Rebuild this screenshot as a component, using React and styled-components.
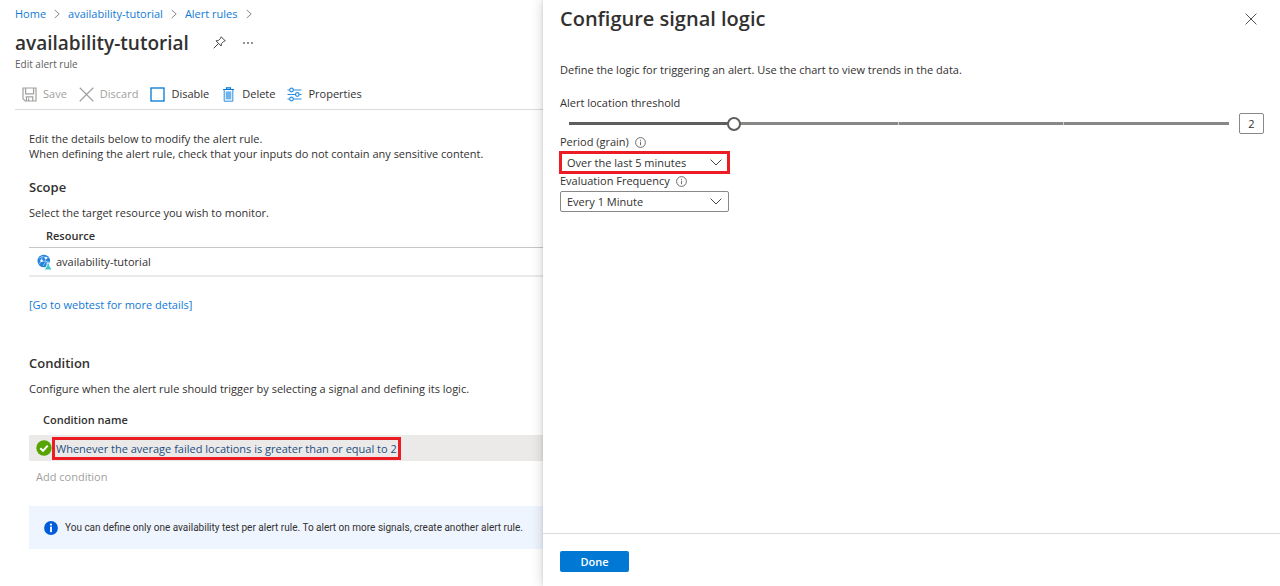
import React, { useState } from "react";
import styled, { createGlobalStyle, css } from "styled-components";

const color = {
  text: "#323130",
  muted: "#605e5c",
  disabled: "#a19f9d",
  line: "#c8c6c4",
  link: "#0f7ad5",
  blue: "#0078d4",
  mark: "#ec1c24",
};

const GlobalStyle = createGlobalStyle`
  *, *::before, *::after { box-sizing: border-box; }
  body {
    margin: 0;
    background: #fff;
    color: ${color.text};
    font: 11px/20px "Open Sans", "Noto Sans", sans-serif;
  }
  h1, h2, h3, p { margin: 0; font-weight: 400; }
  button, input, select { font: inherit; color: inherit; }
  svg { display: block; flex: none; }
`;

const Page = styled.div`
  display: grid;
  grid-template-columns: minmax(0, 543fr) minmax(0, 737fr);
  min-height: 100vh;
`;

/* ---------- alert rule blade ---------- */

const Blade = styled.main`
  overflow: hidden;
  padding-bottom: 20px;
`;

const BladeHeader = styled.header`
  padding: 4px 0 0 15px;
`;

const Breadcrumb = styled.nav`
  display: flex;
  align-items: center;
  gap: 8px;
  white-space: nowrap;
`;

const Link = styled.a`
  color: ${color.link};
  text-decoration: none;
`;

const TitleRow = styled.div`
  display: flex;
  align-items: center;
  height: 29px;
  margin-top: 4px;
`;

const PageTitle = styled.h1`
  margin-right: 24px;
  font-size: 19px;
  font-weight: 600;
  line-height: 30px;
`;

const IconButton = styled.button`
  display: grid;
  place-items: center;
  width: 14px;
  height: 14px;
  margin-right: 14px;
  padding: 0;
  border: 0;
  background: none;
`;

const Subtitle = styled.p`
  color: ${color.muted};
  font-size: 10px;
  line-height: 14px;
`;

const Toolbar = styled.div`
  display: flex;
  gap: 12px;
  height: 31px;
  margin-top: 8px;
  padding-left: 7px;
  border-bottom: 1px solid #dcdbda;
`;

const ToolButton = styled.button`
  display: flex;
  align-items: center;
  gap: 6px;
  padding: 0;
  border: 0;
  background: none;
  white-space: nowrap;
  &:disabled { color: ${color.disabled}; }
`;

const BladeBody = styled.div`
  padding: 21px 0 0 29px;
`;

const Intro = styled.p`
  line-height: 15px;
  white-space: nowrap;
`;

const SectionTitle = styled.h2`
  margin: ${(p) => p.$space}px 0 6px;
  font-size: 13px;
  font-weight: 600;
`;

const Text = styled.p`
  white-space: nowrap;
`;

const Table = styled.table`
  width: 100%;
  margin-top: ${(p) => p.$space || 0}px;
  border-collapse: separate;
  border-spacing: 0;
  white-space: nowrap;
`;

const HeadCell = styled.th`
  height: ${(p) => p.$height}px;
  padding: 0 0 0 ${(p) => p.$indent}px;
  border-bottom: ${(p) => (p.$ruled ? `1px solid ${color.line}` : "0")};
  font-weight: 600;
  text-align: left;
`;

const ResourceCell = styled.td`
  height: 29px;
  padding: 0 0 0 8px;
  border-bottom: 2px solid #eaeaea;
`;

const WithIcon = styled.span`
  display: flex;
  align-items: center;
  gap: 4px;
`;

const WebtestLine = styled.p`
  margin-top: 18px;
`;

const ConditionCell = styled.td`
  height: 26px;
  padding: 0 0 0 7px;
  background: #ebeae9;
`;

const ConditionLine = styled.span`
  display: flex;
  align-items: center;
`;

const ConditionLink = styled.a`
  padding: 0 1px;
  border: 3px solid ${color.mark};
  color: #1b4f80;
  line-height: 17px;
  text-decoration: none;
`;

const AddCondition = styled.button`
  display: block;
  height: 31px;
  padding: 0 0 0 7px;
  border: 0;
  background: none;
  &:disabled { color: ${color.disabled}; }
`;

const InfoBar = styled.div`
  display: flex;
  align-items: center;
  gap: 7px;
  height: 43px;
  margin-top: 14px;
  padding-left: 15px;
  background: #eff5ff;
  font-family: Roboto, sans-serif;
  font-size: 10px;
  white-space: nowrap;
`;

/* ---------- signal logic panel ---------- */

const Panel = styled.aside`
  position: relative;
  display: flex;
  flex-direction: column;
  background: #fff;
  box-shadow: 0 0 3px rgba(0, 0, 0, 0.12), 0 0 12px rgba(0, 0, 0, 0.18);
`;

const PanelHeader = styled.header`
  display: flex;
  align-items: center;
  justify-content: space-between;
  padding: 4px 8px 0 17px;
`;

const PanelTitle = styled.h2`
  font-size: 20px;
  font-weight: 600;
  line-height: 30px;
`;

const PanelBody = styled.form`
  flex: 1;
  padding: 26px 16px 20px 17px;
`;

const ThresholdLabel = styled.label`
  display: block;
  margin-top: 13px;
`;

const SliderRow = styled.div`
  display: flex;
  align-items: center;
  gap: 3px;
  padding-left: 2px;
`;

const TRACK = `linear-gradient(to right,
  ${color.muted} 25%,
  #8a8886 25%, #8a8886 calc(50% - 1px), #d0cfce calc(50% - 1px), #d0cfce 50%,
  #8a8886 50%, #8a8886 calc(75% - 1px), #d0cfce calc(75% - 1px), #d0cfce 75%,
  #8a8886 75%)`;

const Slider = styled.input`
  flex: 1;
  min-width: 0;
  height: 14px;
  margin: 0;
  appearance: none;
  background: ${TRACK} center / calc(100% - 14px) 3px no-repeat;
  &::-webkit-slider-thumb {
    appearance: none;
    width: 14px;
    height: 14px;
    border: 2px solid ${color.muted};
    border-radius: 50%;
    background: #fff;
  }
`;

const ValueBox = styled.input`
  width: 25px;
  height: 21px;
  padding: 0;
  border: 1px solid #8a8886;
  border-radius: 2px;
  text-align: center;
`;

const FieldLabel = styled.div`
  display: flex;
  align-items: center;
  gap: 6px;
  padding-bottom: 2px;
  line-height: 16px;
`;

const SelectWrap = styled.div`
  position: relative;
  width: 169px;
  height: 21px;
  ${(p) =>
    p.$marked &&
    css`
      outline: 3px solid ${color.mark};
      outline-offset: -2px;
    `}
  svg {
    position: absolute;
    top: 7px;
    right: 7px;
    pointer-events: none;
  }
`;

const Select = styled.select`
  display: block;
  width: 100%;
  height: 100%;
  padding: 0 24px 0 6px;
  border: 1px solid #8a8886;
  border-radius: 2px;
  appearance: none;
  background: #fff;
`;

const PanelFooter = styled.footer`
  padding: 17px 17px 14px;
  border-top: 1px solid #dcdbda;
`;

const PrimaryButton = styled.button`
  display: block;
  width: 69px;
  height: 21px;
  padding: 0;
  border: 0;
  border-radius: 2px;
  background: ${color.blue};
  color: #fff;
  font-weight: 600;
`;

/* ---------- icons ---------- */

const Chevron = () => (
  <svg width="6" height="10" viewBox="0 0 6 10" fill="none" stroke="#8a8886">
    <path d="M0.7 1 5.2 5 0.7 9" />
  </svg>
);

const ChevronDown = () => (
  <svg width="12" height="7" viewBox="0 0 12 7" fill="none" stroke="#484644">
    <path d="M0.6 0.6 6 6 11.4 0.6" />
  </svg>
);

const Pin = () => (
  <svg width="13" height="13" viewBox="0 0 13 13" fill="none" stroke="#484644" strokeLinejoin="round">
    <path d="M8.2 0.8 12.2 4.8 10.8 5.3 8.5 7.6 8.1 10 3 4.9 5.4 4.5 7.7 2.2ZM5.4 7.6 0.7 12.3" />
  </svg>
);

const Dots = () => (
  <svg width="12" height="4" viewBox="0 0 12 4" fill="#605e5c">
    <circle cx="2" cy="2" r="0.9" />
    <circle cx="6" cy="2" r="0.9" />
    <circle cx="10" cy="2" r="0.9" />
  </svg>
);

const SaveIcon = () => (
  <svg width="15" height="15" viewBox="0 0 15 15" fill="none" stroke="#a19f9d" strokeWidth="1.2">
    <path d="M1 1H14V14H3.2L1 11.8ZM3.6 1V6.8H11.6V1M4.4 14V9.8H10.8V14M6.6 11.2V14" />
  </svg>
);

const Cross = ({ size, stroke }) => (
  <svg width={size} height={size} viewBox="0 0 14 14" fill="none" stroke={stroke} strokeWidth="1.1">
    <path d="M0.7 0.7 13.3 13.3M13.3 0.7 0.7 13.3" />
  </svg>
);

const SquareIcon = () => (
  <svg width="15" height="15" viewBox="0 0 15 15" fill="none" stroke="#0078d4" strokeWidth="1.3">
    <rect x="1" y="1" width="13" height="13" />
  </svg>
);

const TrashIcon = () => (
  <svg width="15" height="15" viewBox="0 0 15 15" fill="none" stroke="#0078d4">
    <path d="M2 2.5H13M5.5 2.5V0.8H9.5V2.5" strokeWidth="1.2" />
    <path d="M3.2 2.8V14.2H11.8V2.8" stroke="#2b8fe0" />
    <rect x="4.7" y="4.4" width="5.6" height="8" fill="#6fb3ee" stroke="none" />
  </svg>
);

const PropertiesIcon = () => (
  <svg width="15" height="15" viewBox="0 0 15 15" fill="none" stroke="#2b8fe0" strokeWidth="1.2">
    <path d="M0.5 3H2.6M6.4 3H14.5M0.5 7.5H8.4M12.2 7.5H14.5M0.5 12H2.6M6.4 12H14.5" />
    <circle cx="4.5" cy="3" r="1.8" />
    <circle cx="10.3" cy="7.5" r="1.8" />
    <circle cx="4.5" cy="12" r="1.8" />
  </svg>
);

const WebtestIcon = () => (
  <svg width="15" height="16" viewBox="0 0 15 16">
    <circle cx="6.8" cy="7" r="6.3" fill="#2484dc" />
    <path
      d="M2.2 4.5 5 2.4 8.6 3.6 11.4 3.8M5 2.4 4.4 7 2.2 10.2M8.6 3.6 8.8 7.4 4.4 7M8.8 7.4 6 12M8.8 7.4 12.4 8.2"
      fill="none"
      stroke="#9fcdf6"
      strokeWidth="0.8"
    />
    <circle cx="4.6" cy="6.8" r="1.3" fill="#fff" />
    <circle cx="8.8" cy="4" r="1.2" fill="#fff" />
    <path d="M9.6 8.6H12.8V11L15 15.4H7.6L9.6 11Z" fill="#fff" />
    <path d="M10.4 9.4H12V11.4L14.6 15.4H7.8L10.4 11.4Z" fill="#3cc6cf" />
  </svg>
);

const SuccessIcon = () => (
  <svg width="16" height="16" viewBox="0 0 16 16">
    <circle cx="8" cy="8" r="7.7" fill="#57a300" />
    <path d="M4.3 8.2 7 10.8 11.7 5.6" fill="none" stroke="#fff" strokeWidth="2" />
  </svg>
);

const InfoBadge = () => (
  <svg width="14" height="14" viewBox="0 0 14 14">
    <circle cx="7" cy="7" r="6.9" fill="#015cda" />
    <circle cx="7" cy="3.6" r="1.1" fill="#fff" />
    <rect x="6.1" y="5.6" width="1.8" height="5.6" fill="#fff" />
  </svg>
);

const InfoOutline = () => (
  <svg width="11" height="11" viewBox="0 0 11 11" fill="none" stroke="#605e5c" strokeWidth="0.9">
    <circle cx="5.5" cy="5.5" r="4.9" />
    <path d="M5.5 4.7V8.2M5.5 2.8V3.8" />
  </svg>
);

/* ---------- page ---------- */

export default function App() {
  const [threshold, setThreshold] = useState(2);
  const changeThreshold = (e) => setThreshold(e.target.value);

  return (
    <Page>
      <GlobalStyle />
      <Blade>
        <BladeHeader>
          <Breadcrumb aria-label="Breadcrumb">
            <Link href="#home">Home</Link>
            <Chevron />
            <Link href="#resource">availability-tutorial</Link>
            <Chevron />
            <Link href="#rules">Alert rules</Link>
            <Chevron />
          </Breadcrumb>
          <TitleRow>
            <PageTitle>availability-tutorial</PageTitle>
            <IconButton type="button" aria-label="Pin"><Pin /></IconButton>
            <IconButton type="button" aria-label="More"><Dots /></IconButton>
          </TitleRow>
          <Subtitle>Edit alert rule</Subtitle>
          <Toolbar>
            <ToolButton type="button" disabled><SaveIcon />Save</ToolButton>
            <ToolButton type="button" disabled><Cross size={15} stroke="#a19f9d" />Discard</ToolButton>
            <ToolButton type="button"><SquareIcon />Disable</ToolButton>
            <ToolButton type="button"><TrashIcon />Delete</ToolButton>
            <ToolButton type="button"><PropertiesIcon />Properties</ToolButton>
          </Toolbar>
        </BladeHeader>

        <BladeBody>
          <Intro>Edit the details below to modify the alert rule.</Intro>
          <Intro>When defining the alert rule, check that your inputs do not contain any sensitive content.</Intro>

          <SectionTitle $space={16}>Scope</SectionTitle>
          <Text>Select the target resource you wish to monitor.</Text>
          <Table $space={2}>
            <thead>
              <tr><HeadCell $height={23} $indent={17} $ruled>Resource</HeadCell></tr>
            </thead>
            <tbody>
              <tr>
                <ResourceCell>
                  <WithIcon><WebtestIcon />availability-tutorial</WithIcon>
                </ResourceCell>
              </tr>
            </tbody>
          </Table>
          <WebtestLine><Link href="#webtest">[Go to webtest for more details]</Link></WebtestLine>

          <SectionTitle $space={38}>Condition</SectionTitle>
          <Text>Configure when the alert rule should trigger by selecting a signal and defining its logic.</Text>
          <Table $space={5}>
            <thead>
              <tr><HeadCell $height={31} $indent={14}>Condition name</HeadCell></tr>
            </thead>
            <tbody>
              <tr>
                <ConditionCell>
                  <ConditionLine>
                    <SuccessIcon />
                    <ConditionLink href="#condition">
                      Whenever the average failed locations is greater than or equal to 2
                    </ConditionLink>
                  </ConditionLine>
                </ConditionCell>
              </tr>
            </tbody>
          </Table>
          <AddCondition type="button" disabled>Add condition</AddCondition>
          <InfoBar>
            <InfoBadge />
            You can define only one availability test per alert rule. To alert on more signals, create another alert rule.
          </InfoBar>
        </BladeBody>
      </Blade>

      <Panel>
        <PanelHeader>
          <PanelTitle>Configure signal logic</PanelTitle>
          <IconButton type="button" aria-label="Close"><Cross size={12} stroke="#484644" /></IconButton>
        </PanelHeader>
        <PanelBody>
          <Text>Define the logic for triggering an alert. Use the chart to view trends in the data.</Text>
          <ThresholdLabel htmlFor="threshold">Alert location threshold</ThresholdLabel>
          <SliderRow>
            <Slider id="threshold" type="range" min="1" max="5" value={threshold} onChange={changeThreshold} />
            <ValueBox aria-label="Threshold value" value={threshold} onChange={changeThreshold} />
          </SliderRow>
          <FieldLabel>
            <label htmlFor="period">Period (grain)</label>
            <InfoOutline />
          </FieldLabel>
          <SelectWrap $marked>
            <Select id="period"><option>Over the last 5 minutes</option></Select>
            <ChevronDown />
          </SelectWrap>
          <FieldLabel>
            <label htmlFor="frequency">Evaluation Frequency</label>
            <InfoOutline />
          </FieldLabel>
          <SelectWrap>
            <Select id="frequency"><option>Every 1 Minute</option></Select>
            <ChevronDown />
          </SelectWrap>
        </PanelBody>
        <PanelFooter>
          <PrimaryButton type="button">Done</PrimaryButton>
        </PanelFooter>
      </Panel>
    </Page>
  );
}
